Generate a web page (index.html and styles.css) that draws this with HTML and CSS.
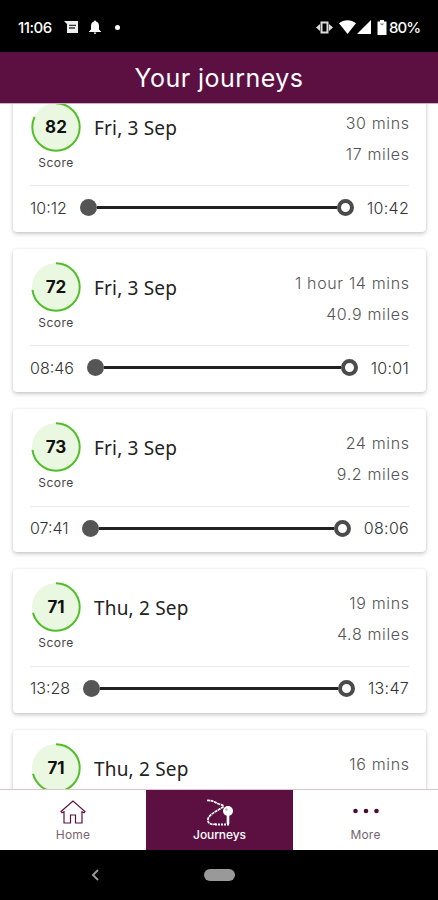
FILE: index.html
```html
<!DOCTYPE html>
<html lang="en">
<head>
<meta charset="utf-8">
<title>Your journeys</title>
<link rel="stylesheet" href="styles.css">
</head>
<body>
<div class="status">
  <span class="clock">11:06</span>
  <svg class="s-msg" width="14" height="13" viewBox="0 0 14 13"><path fill="#eee" d="M0 0h14v12H3V3z"/><path stroke="#333" stroke-width="1.3" d="M5 4.3h7M5 7h6"/></svg>
  <svg class="s-bell" width="12" height="14" viewBox="0 0 12 14"><path fill="#fff" d="M5 1.500a1 1 0 0 1 2 0C9 2 10 3.700 10 6v3.500l2 2v.6H0v-.6l2-2V6c0-2.300 1-4 3-4.500zM4.700 12.600h2.600a1.300 1.300 0 0 1-2.600 0z"/></svg>
  <span class="s-dot"></span>
  <svg class="s-vib" width="17" height="13" viewBox="0 0 17 13"><path fill="none" stroke="#ddd" stroke-width="2" d="M5.500 1.500h6v10h-6z"/><path fill="#ddd" d="M4 3v7L0 6.500zM13 3v7l4-3.500z"/></svg>
  <svg class="s-wifi" width="17" height="14" viewBox="0 0 17 14"><path fill="#fff" d="M0 3.200C5-.9 12-.9 17 3.200L8.500 14z"/></svg>
  <svg class="s-sig" width="14" height="14" viewBox="0 0 14 14"><path fill="#fff" d="M14 0v14H0z"/></svg>
  <svg class="s-bat" width="10" height="15" viewBox="0 0 10 15"><path fill="#fff" d="M3 0h4v1.500h2.500V15H.5V1.500H3z"/><path fill="#888" d="M2.500 3.500h5L5 5.500z"/></svg>
  <span class="pct">80%</span>
</div>
<div class="header">Your journeys</div>

<div class="list">
  <div class="card">
    <div class="top">
      <div class="score">
        <svg width="50" height="50" viewBox="0 0 50 50"><circle class="disc" cx="25" cy="25" r="24"/><circle class="arc" cx="25" cy="25" r="23.700" pathLength="100" stroke-dasharray="82 100"/><text x="25" y="31">82</text></svg>
        <span>Score</span>
      </div>
      <div class="date">Fri, 3 Sep</div>
      <div class="info"><span>30 mins</span><span>17 miles</span></div>
    </div>
    <div class="route"><span>10:12</span><i class="start"></i><i class="line"></i><i class="end"></i><span class="arrive">10:42</span></div>
  </div>

  <div class="card">
    <div class="top">
      <div class="score">
        <svg width="50" height="50" viewBox="0 0 50 50"><circle class="disc" cx="25" cy="25" r="24"/><circle class="arc" cx="25" cy="25" r="23.700" pathLength="100" stroke-dasharray="73 100"/><text x="25" y="31">72</text></svg>
        <span>Score</span>
      </div>
      <div class="date">Fri, 3 Sep</div>
      <div class="info"><span>1 hour 14 mins</span><span>40.9 miles</span></div>
    </div>
    <div class="route"><span>08:46</span><i class="start"></i><i class="line"></i><i class="end"></i><span class="arrive">10:01</span></div>
  </div>

  <div class="card">
    <div class="top">
      <div class="score">
        <svg width="50" height="50" viewBox="0 0 50 50"><circle class="disc" cx="25" cy="25" r="24"/><circle class="arc" cx="25" cy="25" r="23.700" pathLength="100" stroke-dasharray="73 100"/><text x="25" y="31">73</text></svg>
        <span>Score</span>
      </div>
      <div class="date">Fri, 3 Sep</div>
      <div class="info"><span>24 mins</span><span>9.2 miles</span></div>
    </div>
    <div class="route"><span>07:41</span><i class="start"></i><i class="line"></i><i class="end"></i><span class="arrive">08:06</span></div>
  </div>

  <div class="card">
    <div class="top">
      <div class="score">
        <svg width="50" height="50" viewBox="0 0 50 50"><circle class="disc" cx="25" cy="25" r="24"/><circle class="arc" cx="25" cy="25" r="23.700" pathLength="100" stroke-dasharray="71 100"/><text x="25" y="31">71</text></svg>
        <span>Score</span>
      </div>
      <div class="date">Thu, 2 Sep</div>
      <div class="info"><span>19 mins</span><span>4.8 miles</span></div>
    </div>
    <div class="route"><span>13:28</span><i class="start"></i><i class="line"></i><i class="end"></i><span class="arrive">13:47</span></div>
  </div>

  <div class="card">
    <div class="top">
      <div class="score">
        <svg width="50" height="50" viewBox="0 0 50 50"><circle class="disc" cx="25" cy="25" r="24"/><circle class="arc" cx="25" cy="25" r="23.700" pathLength="100" stroke-dasharray="71 100"/><text x="25" y="31">71</text></svg>
      </div>
      <div class="date">Thu, 2 Sep</div>
      <div class="info"><span>16 mins</span></div>
    </div>
  </div>
</div>

<div class="nav">
  <div class="tab">
    <svg width="26" height="26" viewBox="0 0 26 26"><path fill="none" stroke="#5c1040" stroke-width="1.200" d="M1 12.500 13 2l12 10.500-1 1.200-2-1V24h-6.500v-8h-5v8H4V12.700l-2 1z"/></svg>
    <span>Home</span>
  </div>
  <div class="tab active">
    <svg width="30" height="28" viewBox="0 0 30 28"><path fill="none" stroke="#fff" stroke-width="1.700" stroke-dasharray="3 .6" d="M2 1.500c5-.5 8 2 12 3.500 3 1 5 1 4 3C14 11 4 15 3 20c-1 5 4 6 8 5"/><path stroke="#fff" stroke-width="2" stroke-dasharray="2 1" d="M10 25.500h14"/><circle cx="23" cy="12" r="5" fill="#fff"/><path stroke="#fff" stroke-width="2.600" d="M23 14v11"/><circle cx="21.500" cy="10.500" r="1.200" fill="#c9a5ba"/></svg>
    <span>Journeys</span>
  </div>
  <div class="tab">
    <svg width="26" height="26" viewBox="0 0 26 26"><g fill="#4b0c34"><circle cx="2.500" cy="12" r="2.300"/><circle cx="13" cy="12" r="2.300"/><circle cx="23.500" cy="12" r="2.300"/></g></svg>
    <span>More</span>
  </div>
</div>
<div class="system">
  <svg width="8" height="12" viewBox="0 0 8 12"><path fill="none" stroke="#999" stroke-width="2" d="M7 1 2 6l5 5"/></svg>
  <span class="pill"></span>
</div>
</body>
</html>
```
FILE: styles.css
```css
* {
  box-sizing: border-box;
}

body {
  margin: 0;
  width: 438px;
  height: 900px;
  overflow: hidden;
  display: flex;
  flex-direction: column;
  background: #fff;
  font-family: Inter, "Liberation Sans", sans-serif;
}

.status {
  height: 52px;
  flex: none;
  background: #000;
  color: #fff;
  display: flex;
  align-items: center;
  padding: 2px 17px 0 18px;
  font-size: 15px;
  font-weight: 500;
}

.clock {
  width: 46px;
  letter-spacing: -0.5px;
}

.s-bell {
  margin-left: 11px;
}

.s-dot {
  width: 5px;
  height: 5px;
  border-radius: 50%;
  background: #fff;
  margin-left: 14px;
}

.s-vib {
  margin-left: auto;
}

.s-wifi {
  margin-left: 6px;
}

.s-sig {
  margin-left: 1px;
}

.s-bat {
  margin-left: 6px;
}

.pct {
  margin-left: 2px;
  width: 32px;
  letter-spacing: -0.9px;
}

.header {
  height: 51px;
  flex: none;
  background: #5c1041;
  color: #fff;
  text-align: center;
  font-size: 25px;
  line-height: 52px;
  letter-spacing: 0.45px;
}

.list {
  height: 686px;
  flex: none;
  overflow: hidden;
  padding: 0 12px 0 13px;
  border-top: 1px solid #cbb3c1;
}

.card {
  height: 143.300px;
  margin-bottom: 17px;
  padding: 13px 17px 0;
  background: #fff;
  border-radius: 4px;
  box-shadow: 0 2px 4px rgba(0, 0, 0, 0.2), 0 0 3px rgba(0, 0, 0, 0.08);
}

.card:first-child {
  margin-top: -15.500px;
}

.top {
  height: 84.500px;
  display: flex;
  border-bottom: 1px solid #e9e9e9;
}

.score {
  width: 52px;
  display: flex;
  flex-direction: column;
  align-items: center;
  font-size: 12px;
  letter-spacing: 0.5px;
  color: #444;
}

.score span {
  margin-top: 3px;
}

.disc {
  fill: #eaf7e1;
}

.arc {
  fill: none;
  stroke: #4fbf27;
  stroke-width: 2;
  transform: rotate(-90deg);
  transform-origin: 25px 25px;
}

.score text {
  font-size: 17px;
  font-weight: 700;
  letter-spacing: 0;
  text-anchor: middle;
  fill: #111;
}

.date {
  margin-left: 12px;
  font: 19px/52px "Noto Sans", sans-serif;
  letter-spacing: 0.18px;
  color: #222;
}

.info {
  margin-left: auto;
  margin-right: -0.7px;
  display: flex;
  flex-direction: column;
  align-items: flex-end;
  padding-top: 6px;
  font-size: 16px;
  line-height: 31px;
  font-weight: 300;
  letter-spacing: 0.65px;
  color: #555;
}

.route {
  height: 43px;
  display: flex;
  align-items: center;
  font-size: 16px;
  font-weight: 300;
  color: #333;
}

.arrive {
  letter-spacing: 0.3px;
}

.start {
  width: 17px;
  height: 17px;
  border-radius: 50%;
  background: #555;
  margin-left: 13px;
}

.line {
  flex: 1;
  height: 3px;
  background: #222;
}

.end {
  width: 17px;
  height: 17px;
  border-radius: 50%;
  border: 4px solid #4b4b4b;
  margin-right: 13px;
}

.nav {
  height: 61px;
  flex: none;
  display: grid;
  grid-template-columns: 146px 147px 145px;
  border-top: 1px solid #d9c5d0;
}

.tab {
  display: flex;
  flex-direction: column;
  align-items: center;
  justify-content: flex-end;
  padding-bottom: 7px;
  font-size: 12px;
  line-height: 16px;
  letter-spacing: 0.2px;
  color: #76656f;
}

.tab svg {
  margin-bottom: 2px;
}

.active {
  background: #5c1041;
  color: #fff;
  font-weight: 500;
  letter-spacing: -0.1px;
}

.active svg {
  margin-bottom: 0;
}

.system {
  height: 50px;
  background: #000;
  display: flex;
  align-items: center;
  padding-left: 91px;
}

.pill {
  width: 31px;
  height: 12px;
  border-radius: 6px;
  background: #999;
  margin-left: 105px;
}
```
